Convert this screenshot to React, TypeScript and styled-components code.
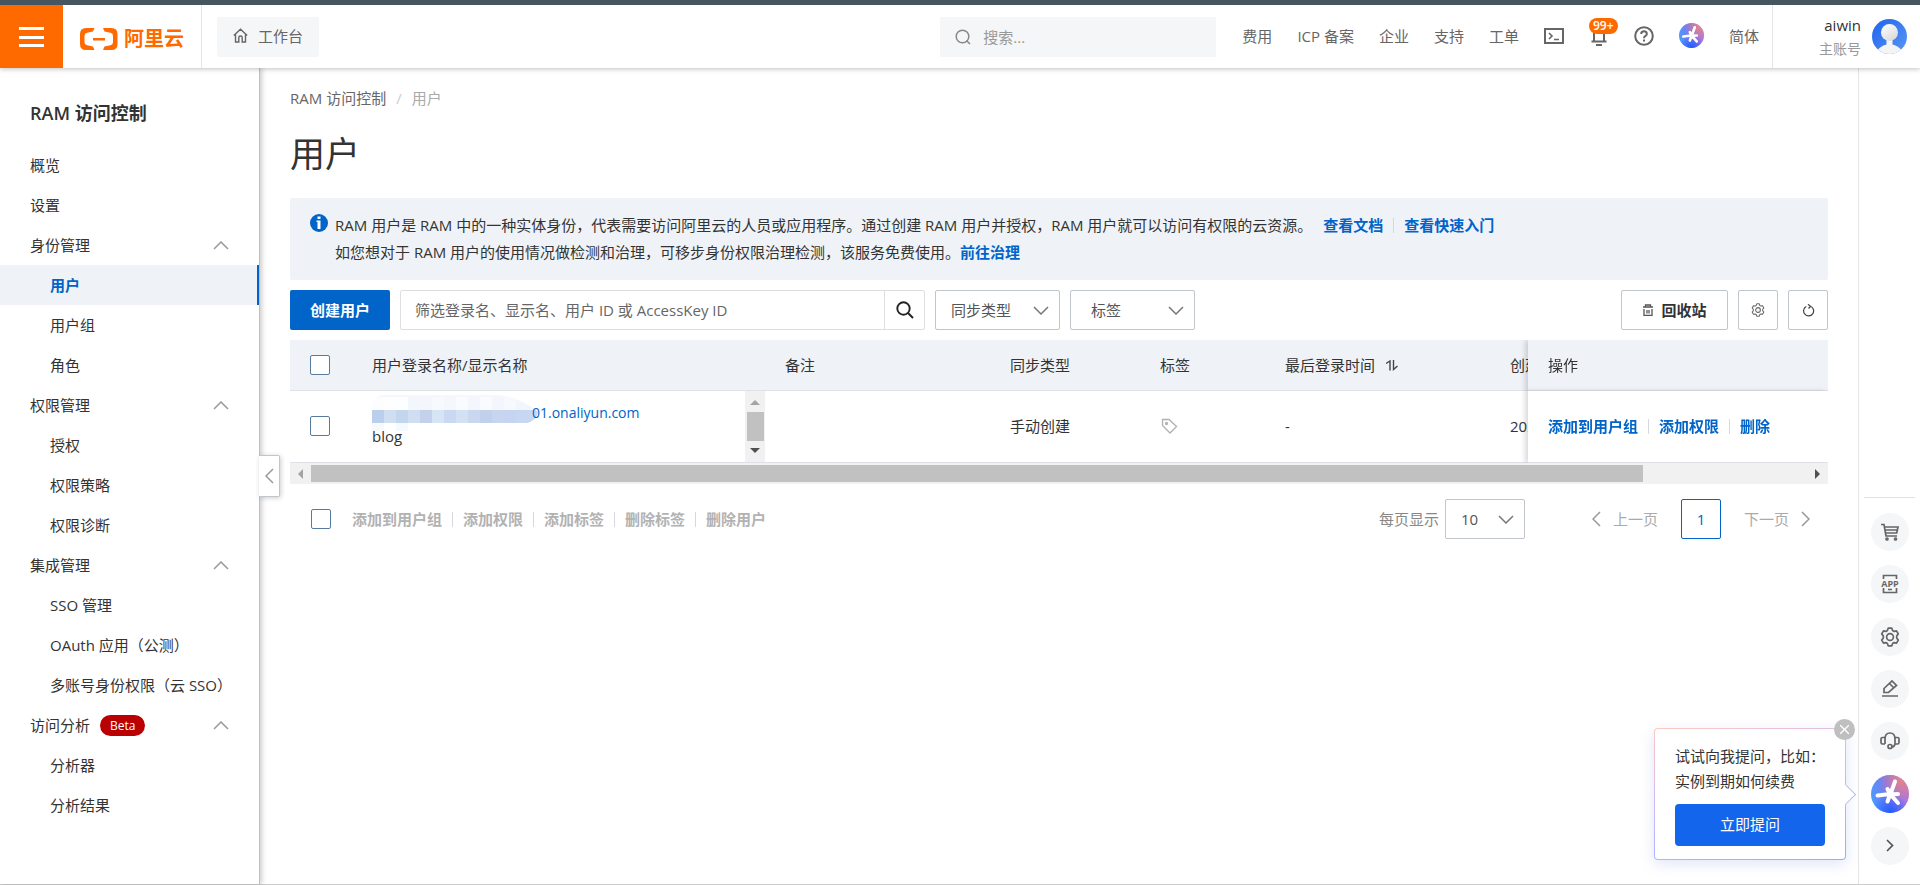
import React from "react";
import styled, { createGlobalStyle, css } from "styled-components";

const GlobalStyle = createGlobalStyle`
  *, *::before, *::after { box-sizing: border-box; }
  body {
    margin: 0;
    background: #fff;
    color: #333;
    font-family: "Open Sans", "Noto Sans CJK SC", sans-serif;
    font-size: 15px;
    line-height: 24px;
  }
  button, input, select { font: inherit; color: inherit; margin: 0; }
  button { cursor: pointer; padding: 0; }
  a { color: inherit; text-decoration: none; }
  svg { display: block; flex: none; }
`;

const Page = styled.div`
  display: flex;
  flex-direction: column;
  min-height: 100vh;
  border-bottom: 1px solid #ccc;
`;

/* ---------- header ---------- */

const Header = styled.header`
  position: relative;
  z-index: 3;
  display: flex;
  height: 68px;
  border-top: 5px solid #465660;
  background: #fff;
  box-shadow: 0 1px 5px rgba(0, 0, 0, 0.25);
`;

const MenuButton = styled.button`
  display: flex;
  align-items: center;
  justify-content: center;
  width: 63px;
  border: 0;
  background: #ff6a00;
`;

const Logo = styled.a`
  display: flex;
  align-items: center;
  gap: 6px;
  width: 139px;
  padding: 5px 0 0 17px;
  border-right: 1px solid #e5e5e5;
  color: #ff6a00;
  font-size: 20px;
  font-weight: 700;
`;

const WorkbenchLink = styled.a`
  display: flex;
  align-items: center;
  gap: 10px;
  align-self: center;
  height: 40px;
  margin-left: 15px;
  padding: 0 16px 2px;
  border-radius: 2px;
  background: #f4f6f8;
  color: #666;
`;

const HeaderSearch = styled.label`
  display: flex;
  align-items: center;
  align-self: center;
  gap: 12px;
  flex: 0 1 276px;
  height: 40px;
  margin-left: auto;
  padding: 0 15px;
  background: #f4f6f8;

  input {
    flex: 1;
    min-width: 0;
    padding: 0;
    border: 0;
    outline: 0;
    background: none;
  }
  input::placeholder { color: #999; opacity: 1; }
`;

const HeaderNav = styled.nav`
  display: flex;
  align-items: center;
  gap: 25px;
  padding: 0 13px 2px 26px;
  border-right: 1px solid #e5e5e5;
  color: #666;
  white-space: nowrap;
`;

const IconButton = styled.button`
  position: relative;
  display: flex;
  align-items: center;
  justify-content: center;
  min-width: 20px;
  border: 0;
  background: none;
`;

const CountBadge = styled.span`
  position: absolute;
  top: -8px;
  left: 0;
  height: 16px;
  padding: 0 4px;
  border-radius: 8px;
  background: #ff6a00;
  color: #fff;
  font-size: 12px;
  font-weight: 600;
  line-height: 16px;
`;

const Account = styled.a`
  display: flex;
  align-items: center;
  justify-content: flex-end;
  gap: 11px;
  width: 147px;
  padding-right: 13px;
  text-align: right;
`;

const AccountText = styled.span`
  display: flex;
  flex-direction: column;
  small { color: #999; font-size: 14px; }
`;

/* ---------- sidebar ---------- */

const Body = styled.div`
  display: flex;
  flex: 1;
`;

const Sidebar = styled.aside`
  position: relative;
  z-index: 2;
  flex: none;
  width: 260px;
  border-right: 1px solid #c0c0c0;
  background: #fff;
  box-shadow: 2px 0 5px rgba(0, 0, 0, 0.2);
`;

const SideTitle = styled.h2`
  margin: 0;
  padding: 33px 30px 20px;
  font-size: 18px;
  font-weight: 600;
  line-height: 24px;
`;

const SideLink = styled.a<{ $nested?: boolean; $active?: boolean }>`
  display: flex;
  align-items: center;
  height: 40px;
  padding-left: ${(p) => (p.$nested ? 50 : 30)}px;
  ${(p) =>
    p.$active &&
    css`
      border-right: 2px solid #0064c8;
      background: #eff3f8;
      color: #0064c8;
      font-weight: 600;
    `}
`;

const SideGroup = styled.button`
  display: flex;
  align-items: center;
  width: 100%;
  height: 40px;
  padding: 0 30px;
  border: 0;
  background: none;
  svg { margin-left: auto; }
`;

const BetaTag = styled.span`
  margin-left: 10px;
  padding: 0 10px;
  border-radius: 11px;
  background: #ba0000;
  color: #fff;
  font-size: 12px;
  line-height: 21px;
`;

const CollapseHandle = styled.button`
  position: absolute;
  top: 387px;
  left: 100%;
  display: flex;
  align-items: center;
  justify-content: center;
  width: 21px;
  height: 42px;
  border: 1px solid #c0c6cc;
  border-left: 0;
  border-radius: 0 2px 2px 0;
  background: #fff;
  box-shadow: 1px 1px 5px rgba(0, 0, 0, 0.2);
`;

/* ---------- main ---------- */

const Main = styled.main`
  flex: 1;
  min-width: 0;
  padding: 18px 30px;
`;

const Breadcrumb = styled.nav`
  display: flex;
  gap: 10px;
  color: #666;
  i { color: #ccc; font-style: normal; }
  span { color: #aaa; }
`;

const PageTitle = styled.h1`
  margin: 20px 0;
  font-size: 35px;
  font-weight: 400;
  line-height: 48px;
`;

const Notice = styled.section`
  display: flex;
  gap: 7px;
  padding: 14px 20px;
  border-radius: 2px;
  background: #eff3f8;
  line-height: 27px;
  p { margin: 0; }
  svg { margin-top: 2px; }
`;

const TextLink = styled.a`
  color: #0064c8;
  font-weight: 700;
`;

const Divider = styled.i`
  display: inline-block;
  width: 1px;
  height: 15px;
  margin: 0 10px;
  background: #d5d9de;
  vertical-align: -2px;
`;

const NoticeLinks = styled.span`
  margin-left: 11px;
`;

const Toolbar = styled.div`
  display: flex;
  gap: 10px;
  margin: 10px 0;
`;

const PrimaryButton = styled.button`
  width: 100px;
  height: 40px;
  border: 0;
  border-radius: 2px;
  background: #0064c8;
  color: #fff;
  font-weight: 700;
`;

const FilterBox = styled.div`
  display: flex;
  flex: 0 1 525px;
  height: 40px;
  border: 1px solid #dedede;
  border-radius: 2px;

  input {
    flex: 1;
    min-width: 0;
    padding: 0 14px;
    border: 0;
    outline: 0;
    background: none;
  }
  input::placeholder { color: #666; opacity: 1; }
  button {
    display: flex;
    align-items: center;
    justify-content: center;
    width: 40px;
    border: 0;
    border-left: 1px solid #dedede;
    background: none;
  }
`;

const SelectBox = styled.span<{ $width: number; $indent?: number }>`
  display: grid;
  align-items: center;
  width: ${(p) => p.$width}px;
  height: 40px;
  border: 1px solid #c0c6cc;
  border-radius: 2px;
  color: #555;

  select, svg { grid-area: 1 / 1; }
  select {
    width: 100%;
    height: 38px;
    padding: 0 30px 0 ${(p) => p.$indent ?? 15}px;
    border: 0;
    outline: 0;
    appearance: none;
    background: none;
  }
  svg {
    justify-self: end;
    margin-right: 10px;
    pointer-events: none;
  }
`;

const ToolbarEnd = styled.div`
  display: flex;
  gap: 10px;
  margin-left: auto;
`;

const OutlineButton = styled.button<{ $width?: number }>`
  display: flex;
  align-items: center;
  justify-content: center;
  gap: 7px;
  width: ${(p) => p.$width ?? 40}px;
  height: 40px;
  border: 1px solid #c0c6cc;
  border-radius: 2px;
  background: #fff;
  font-weight: 700;
`;

const TableViewport = styled.div`
  overflow: hidden;
`;

const Table = styled.table`
  width: 1725px;
  table-layout: fixed;
  border-collapse: separate;
  border-spacing: 0;

  th, td {
    padding: 0 20px;
    border-bottom: 1px solid #dee1e6;
    text-align: left;
    font-weight: 400;
    white-space: nowrap;
  }
  th { height: 51px; background: #eff3f8; }
  td { height: 72px; padding-bottom: 2px; background: #fff; }
  td.scroll { padding-right: 0; padding-bottom: 0; }
  th:last-child, td:last-child {
    position: sticky;
    right: 0;
    box-shadow: -3px 0 5px rgba(0, 0, 0, 0.15);
  }
`;

const Checkbox = styled.input.attrs({ type: "checkbox" })`
  display: block;
  width: 20px;
  height: 20px;
  margin: 0;
  appearance: none;
  border: 1px solid #577b9f;
  border-radius: 2px;
  background: #fff;
`;

const SortHead = styled.span`
  display: flex;
  align-items: center;
  gap: 11px;
`;

const NameCell = styled.div`
  display: flex;
  align-items: center;
  justify-content: space-between;
  height: 71px;
`;

const NameText = styled.div`
  display: flex;
  flex-direction: column;
  padding-bottom: 6px;
  a { display: flex; color: #0064c8; font-size: 14px; }
  > span { line-height: 22px; }
`;

const NameMask = styled.span`
  display: flex;
  width: 160px;
  height: 24px;
  svg { margin-top: -6px; }
`;

const CellScroll = styled.div`
  display: flex;
  flex-direction: column;
  align-items: center;
  justify-content: space-between;
  width: 20px;
  height: 71px;
  padding: 9px 0;
  background: #f1f1f1;
`;

const CellThumb = styled.div`
  width: 17px;
  height: 29px;
  background: #c1c1c1;
`;

const ScrollTrack = styled.div`
  display: flex;
  align-items: center;
  height: 21px;
  padding: 0 8px;
  background: #f1f1f1;
`;

const ScrollThumb = styled.div`
  width: 87.5%;
  height: 17px;
  margin: 0 auto 0 8px;
  background: #c1c1c1;
`;

const Arrow = styled.i<{ $dir: "up" | "down" | "left" | "right"; $dim?: boolean }>`
  width: 0;
  height: 0;
  border: 5px solid transparent;
  ${(p) => {
    const tip = { up: "top", down: "bottom", left: "left", right: "right" }[p.$dir];
    const base = { up: "bottom", down: "top", left: "right", right: "left" }[p.$dir];
    return css`
      border-${tip}-width: 0;
      border-${base}-color: ${p.$dim ? "#a3a3a3" : "#505050"};
    `;
  }}
`;

const Footer = styled.div`
  display: flex;
  align-items: center;
  margin-top: 15px;
  padding: 0 18px 0 21px;
`;

const BatchActions = styled.div`
  display: flex;
  align-items: center;
  margin-left: 21px;
  button { border: 0; background: none; color: #b2b2b2; font-weight: 700; }
`;

const PageSize = styled.label`
  display: flex;
  align-items: center;
  gap: 6px;
  margin-left: auto;
  color: #888;
`;

const Pager = styled.nav`
  display: flex;
  align-items: center;
  gap: 23px;
  margin-left: 67px;
`;

const PagerStep = styled.button`
  display: flex;
  align-items: center;
  gap: 12px;
  border: 0;
  background: none;
  color: #aaa;
`;

const PageNumber = styled.button`
  width: 40px;
  height: 40px;
  border: 1px solid #0064c8;
  border-radius: 2px;
  background: #fff;
  color: #0064c8;
`;

/* ---------- right rail ---------- */

const Rail = styled.aside`
  position: relative;
  display: flex;
  flex: none;
  flex-direction: column;
  align-items: center;
  justify-content: flex-end;
  width: 62px;
  padding-bottom: 19px;
  border-left: 1px solid #e5e5e5;
`;

const RailList = styled.div`
  display: flex;
  flex-direction: column;
  align-items: center;
  justify-content: space-between;
  width: 51px;
  height: 368px;
  padding-top: 15px;
  border-top: 1px solid #e2e2e2;
`;

const RailButton = styled.button`
  display: flex;
  align-items: center;
  justify-content: center;
  width: 38px;
  height: 38px;
  border: 0;
  border-radius: 50%;
  background: #f4f6f8;
`;

const AskCard = styled.section`
  position: absolute;
  right: 74px;
  bottom: 24px;
  width: 192px;
  padding: 15px 20px 13px;
  border: 1px solid transparent;
  border-radius: 4px;
  background:
    linear-gradient(#fff, #fff) padding-box,
    linear-gradient(165deg, #ffc8c0, #c8b8ff 50%, #88b4ff) border-box;
  box-shadow: 0 4px 14px rgba(90, 110, 220, 0.18);
  white-space: nowrap;

  p { margin: 0 0 10px; line-height: 25px; }
`;

const AskPointer = styled.i`
  position: absolute;
  top: 58px;
  right: -8px;
  width: 15px;
  height: 15px;
  border: solid #b4b8ff;
  border-width: 1px 1px 0 0;
  background: #fff;
  transform: rotate(45deg);
`;

const AskButton = styled.button`
  width: 100%;
  height: 42px;
  padding-bottom: 2px;
  border: 0;
  border-radius: 4px;
  background: #1366ec;
  color: #fff;
`;

const CloseButton = styled.button`
  position: absolute;
  top: -10px;
  right: -10px;
  display: flex;
  align-items: center;
  justify-content: center;
  width: 21px;
  height: 21px;
  border: 0;
  border-radius: 50%;
  background: #bfbfbf;
`;

/* ---------- drawings ---------- */

type ChevronDir = "up" | "down" | "left" | "right";
const CHEVRON: Record<ChevronDir, [number, number, string]> = {
  up: [16, 9, "M1 8 8 1l7 7"],
  down: [16, 9, "M1 1l7 7 7-7"],
  left: [9, 16, "M8 1 1 8l7 7"],
  right: [9, 16, "M1 1l7 7-7 7"],
};

const Chevron = ({ dir, color = "#999" }: { dir: ChevronDir; color?: string }) => {
  const [w, h, d] = CHEVRON[dir];
  return (
    <svg width={w} height={h} viewBox={`0 0 ${w} ${h}`} fill="none" stroke={color} strokeWidth="1.5">
      <path d={d} />
    </svg>
  );
};

const Line = ({ size = 20, width = 1.6, color = "#666", children }: {
  size?: number; width?: number; color?: string; children: React.ReactNode;
}) => (
  <svg width={size} height={size} viewBox={`0 0 ${size} ${size}`} fill="none" stroke={color} strokeWidth={width}>
    {children}
  </svg>
);

const Gear = ({ size, width }: { size: number; width: number }) => (
  <svg width={size} height={size} viewBox="0 0 20 20" fill="none" stroke="#666" strokeWidth={width} strokeLinejoin="round">
    <path d="M8.2 1.2h3.6l.8 2.3 1.5.9 2.4-.5 1.8 3.1-1.6 1.9v2.2l1.6 1.9-1.8 3.1-2.4-.5-1.5.9-.8 2.3H8.2l-.8-2.3-1.5-.9-2.4.5L1.7 13l1.6-1.9V8.9L1.7 7l1.8-3.1 2.4.5 1.5-.9z" />
    <circle cx="10" cy="10" r="3.4" />
  </svg>
);

const AiMark = ({ size, id }: { size: number; id: string }) => (
  <svg width={size} height={size} viewBox="0 0 38 38">
    <defs>
      <linearGradient id={`${id}-base`} x1="0" y1="0.6" x2="1" y2="0.4">
        <stop offset="0" stopColor="#4a9cff" />
        <stop offset="0.5" stopColor="#7b74ee" />
        <stop offset="1" stopColor="#b574e0" />
      </linearGradient>
      <radialGradient id={`${id}-warm`} cx="0.8" cy="0.15" r="0.6">
        <stop offset="0" stopColor="#e4848a" />
        <stop offset="1" stopColor="#e4848a" stopOpacity="0" />
      </radialGradient>
      <radialGradient id={`${id}-cool`} cx="0.5" cy="1" r="0.5">
        <stop offset="0" stopColor="#1f5cff" />
        <stop offset="1" stopColor="#1f5cff" stopOpacity="0" />
      </radialGradient>
    </defs>
    <circle cx="19" cy="19" r="19" fill={`url(#${id}-base)`} />
    <circle cx="19" cy="19" r="19" fill={`url(#${id}-warm)`} />
    <circle cx="19" cy="19" r="19" fill={`url(#${id}-cool)`} />
    <path
      d="M19.500 19 24 6.500M19 19l-2.500-5M19 19 6.500 20.500M19 19.500l8-.5M19.500 19.500l7.500 8.500M19 19.500l-2.500 7"
      stroke="#fff"
      strokeWidth="4"
      strokeLinecap="round"
    />
  </svg>
);

const Avatar = () => (
  <svg width="35" height="35" viewBox="0 0 35 35">
    <defs>
      <clipPath id="avatar-clip"><circle cx="17.5" cy="17.5" r="17.5" /></clipPath>
      <linearGradient id="avatar-bg" x1="0" y1="0" x2="1" y2="1">
        <stop offset="0" stopColor="#1d63ee" />
        <stop offset="1" stopColor="#5c97f5" />
      </linearGradient>
      <linearGradient id="avatar-head" x1="0" y1="0" x2="0.6" y2="1">
        <stop offset="0" stopColor="#fff" />
        <stop offset="1" stopColor="#dcdcdc" />
      </linearGradient>
    </defs>
    <g clipPath="url(#avatar-clip)">
      <rect width="35" height="35" fill="url(#avatar-bg)" />
      <path d="M5 32q3-5 9.500-6.500V20h6v5.500Q27 27 30 32v4H5z" fill="#f4f4f4" />
      <circle cx="17.5" cy="13.5" r="8.500" fill="url(#avatar-head)" />
    </g>
  </svg>
);

const MOSAIC = ["#b9cfec", "#d0def1", "#c4d5ee", "#d0def2", "#c3d2ea", "#d7e4f4", "#c9d9f1", "#d3e1f3", "#c9d8f0", "#c1d0eb", "#c7d6ee", "#c5d4f0", "#c8d7f1", "#c8d7f1"];
const MOSAIC_TOP = ["#fbfdfe", "#fefefe", "#fcfeff", "#f2f7fd", "#f3f7fd", "#f6f9fe", "#f4f8fd", "#f8fbff", "#f3f7fd", "#f9fbff", "#f3f6fc", "#f6f9fd", "#f1f6fd", "#f1f6fd"];

const HiddenName = () => (
  <svg width="166" height="36" viewBox="0 0 166 36" aria-hidden="true">
    <defs>
      <clipPath id="mosaic-clip"><path d="M0 15V9Q2 0 12 0h116q24 4 38 17-2 9-11 11H36v8H0z" /></clipPath>
    </defs>
    <g clipPath="url(#mosaic-clip)">
      <rect width="166" height="4" fill="#f6f7fc" />
      {MOSAIC_TOP.map((c, i) => <rect key={i} x={i * 12} y="2" width="12" height="13" fill={c} />)}
      {MOSAIC.map((c, i) => <rect key={i} x={i * 12} y="15" width="12" height="13" fill={c} />)}
      <rect y="28" width="12" height="8" fill="#f8f9fa" />
      <rect x="24" y="28" width="12" height="8" fill="#f5faff" />
    </g>
  </svg>
);

/* ---------- data ---------- */

const GROUPS: { title: string; beta?: boolean; items: string[] }[] = [
  { title: "身份管理", items: ["用户", "用户组", "角色"] },
  { title: "权限管理", items: ["授权", "权限策略", "权限诊断"] },
  { title: "集成管理", items: ["SSO 管理", "OAuth 应用（公测）", "多账号身份权限（云 SSO）"] },
  { title: "访问分析", beta: true, items: ["分析器", "分析结果"] },
];
const BATCH = ["添加到用户组", "添加权限", "添加标签", "删除标签", "删除用户"];
const ROW_ACTIONS = ["添加到用户组", "添加权限", "删除"];
const COLUMN_WIDTHS = [62, 413, 225, 150, 125, 225, 225, 300];

const withDividers = (nodes: React.ReactNode[]) =>
  nodes.map((node, i) => (
    <React.Fragment key={i}>
      {i > 0 && <Divider />}
      {node}
    </React.Fragment>
  ));

const TopBar = () => (
  <Header>
    <MenuButton aria-label="菜单">
      <svg width="25" height="20" viewBox="0 0 25 20" stroke="#fff" strokeWidth="3">
        <path d="M0 1.5h25M0 10.5h25M0 18.500h25" />
      </svg>
    </MenuButton>
    <Logo href="#">
      <svg width="38" height="22" viewBox="0 0 38 22" fill="#ff6a00">
        <path d="M14.500 0H6Q0 0 0 6v10q0 6 6 6h8.500L13 18.500l-6-1.300q-2.500-.6-2.500-3V7.800q0-2.400 2.500-3l6-1.300z" />
        <path d="M23 0h8.500q6 0 6 6v10q0 6-6 6H23l1.500-3.500 6-1.300q2.500-.6 2.500-3V7.800q0-2.400-2.500-3l-6-1.300z" />
        <path d="M13 10h12v2.500H13z" />
      </svg>
      阿里云
    </Logo>
    <WorkbenchLink href="#">
      <Line size={15} width={1.4}>
        <path d="M.8 7.500 7.500 1.300l6.700 6.200M2.500 6.500V14h3.300V9.500q0-1.500 1.700-1.500t1.700 1.500V14h3.300V6.500" />
      </Line>
      工作台
    </WorkbenchLink>
    <HeaderSearch>
      <Line size={16} width={1.5} color="#888">
        <circle cx="7.5" cy="7.5" r="6.3" />
        <path d="M11.500 11.500 15 15" />
      </Line>
      <input placeholder="搜索..." aria-label="搜索" />
    </HeaderSearch>
    <HeaderNav>
      {["费用", "ICP 备案", "企业", "支持", "工单"].map((t) => <a key={t} href="#">{t}</a>)}
      <IconButton aria-label="Cloud Shell">
        <Line width={2}>
          <path d="M1 3h18v14H1z" />
          <path d="m5 7 3 3-3 3M10 13.500h5" strokeWidth="1.6" />
        </Line>
      </IconButton>
      <IconButton aria-label="消息">
        <Line width={2}>
          <path d="M5 15V8q0-4.500 5-4.500T15 8v7M2.500 15.500h15M7 19h6" />
        </Line>
        <CountBadge>99+</CountBadge>
      </IconButton>
      <IconButton aria-label="帮助">
        <Line width={2}>
          <circle cx="10" cy="10" r="8.8" />
          <path d="M7.200 8q0-2.700 2.800-2.700T12.800 8q0 1.300-1.600 2.200Q10 10.900 10 12.200M10 13.500v2" />
        </Line>
      </IconButton>
      <IconButton aria-label="AI 助理"><AiMark size={25} id="ai-top" /></IconButton>
      <a href="#">简体</a>
    </HeaderNav>
    <Account href="#">
      <AccountText>
        <span>aiwin</span>
        <small>主账号</small>
      </AccountText>
      <Avatar />
    </Account>
  </Header>
);

const SideNav = () => (
  <Sidebar>
    <SideTitle>RAM 访问控制</SideTitle>
    <nav>
      <SideLink href="#">概览</SideLink>
      <SideLink href="#">设置</SideLink>
      {GROUPS.map((g) => (
        <div key={g.title}>
          <SideGroup>
            {g.title}
            {g.beta && <BetaTag>Beta</BetaTag>}
            <Chevron dir="up" />
          </SideGroup>
          {g.items.map((t) => (
            <SideLink key={t} href="#" $nested $active={t === "用户"}>{t}</SideLink>
          ))}
        </div>
      ))}
    </nav>
    <CollapseHandle aria-label="收起"><Chevron dir="left" /></CollapseHandle>
  </Sidebar>
);

const UserTable = () => (
  <>
    <TableViewport>
      <Table>
        <colgroup>{COLUMN_WIDTHS.map((w, i) => <col key={i} width={w} />)}</colgroup>
        <thead>
          <tr>
            <th><Checkbox aria-label="全选" /></th>
            <th>用户登录名称/显示名称</th>
            <th>备注</th>
            <th>同步类型</th>
            <th>标签</th>
            <th>
              <SortHead>
                最后登录时间
                <Line size={12} width={1.4} color="#444">
                  <path d="M0 4.500 4 2v9.500M7.500 1v9.500L11.500 7" />
                </Line>
              </SortHead>
            </th>
            <th>创建</th>
            <th>操作</th>
          </tr>
        </thead>
        <tbody>
          <tr>
            <td><Checkbox aria-label="选择 blog" /></td>
            <td className="scroll">
              <NameCell>
                <NameText>
                  <a href="#"><NameMask><HiddenName /></NameMask>01.onaliyun.com</a>
                  <span>blog</span>
                </NameText>
                <CellScroll>
                  <Arrow $dir="up" $dim />
                  <CellThumb />
                  <Arrow $dir="down" />
                </CellScroll>
              </NameCell>
            </td>
            <td />
            <td>手动创建</td>
            <td>
              <Line size={18} width={1.3} color="#b0b0b0">
                <path d="M2.500 2.500h6.500l7.500 7-6.500 6.500-7.500-7.500z" />
                <circle cx="6.5" cy="6.5" r="1" />
              </Line>
            </td>
            <td>-</td>
            <td>202</td>
            <td>{withDividers(ROW_ACTIONS.map((t) => <TextLink href="#">{t}</TextLink>))}</td>
          </tr>
        </tbody>
      </Table>
    </TableViewport>
    <ScrollTrack>
      <Arrow $dir="left" $dim />
      <ScrollThumb />
      <Arrow $dir="right" />
    </ScrollTrack>
  </>
);

const SideRail = () => (
  <Rail>
    <RailList>
      <RailButton aria-label="购物车">
        <Line width={1.7}>
          <path d="M1 2.500h3l2 11.500h11M4.500 5H18l-1.300 6H5.500M5 8h12" />
          <circle cx="7" cy="17" r="1" /><circle cx="15.5" cy="17" r="1" />
        </Line>
      </RailButton>
      <RailButton aria-label="APP">
        <Line width={1.7}>
          <path d="M3.500 5V1.500h13V5M3.500 14v4.500h13V14M8 15.500h4" />
          <text x="10" y="13" textAnchor="middle" fontSize="9" fontWeight="700" fill="#666" stroke="none">APP</text>
        </Line>
      </RailButton>
      <RailButton aria-label="设置"><Gear size={20} width={1.7} /></RailButton>
      <RailButton aria-label="反馈">
        <Line width={1.7}>
          <path d="M2 17h16M4 13.500v-4L12 2l4.500 4.500L8.500 13.500zM9.500 4.500 14 9" />
        </Line>
      </RailButton>
      <RailButton aria-label="客服">
        <Line width={1.7}>
          <path d="M5 13V8Q5 2 10 2t5 6v5M5 6.500H2.500Q1 6.500 1 8v3.500Q1 13 2.500 13H5M15 6.500h2.500Q19 6.500 19 8v3.500q0 1.500-1.500 1.500H15q-.5 3-3.500 3" />
          <circle cx="10" cy="15.5" r="2" />
        </Line>
      </RailButton>
      <RailButton aria-label="AI 助理"><AiMark size={38} id="ai-rail" /></RailButton>
      <RailButton aria-label="展开">
        <svg width="8" height="13" viewBox="0 0 8 13" fill="none" stroke="#555" strokeWidth="1.7"><path d="m1 1 5.500 5.500L1 12" /></svg>
      </RailButton>
    </RailList>
    <AskCard>
      <p>试试向我提问，比如：<br />实例到期如何续费</p>
      <AskButton>立即提问</AskButton>
      <AskPointer />
      <CloseButton aria-label="关闭">
        <svg width="9" height="9" viewBox="0 0 9 9" stroke="#fff" strokeWidth="1.3"><path d="m0 0 9 9M9 0 0 9" /></svg>
      </CloseButton>
    </AskCard>
  </Rail>
);

export default function App() {
  return (
    <Page>
      <GlobalStyle />
      <TopBar />
      <Body>
        <SideNav />
        <Main>
          <Breadcrumb>
            <a href="#">RAM 访问控制</a>
            <i>/</i>
            <span>用户</span>
          </Breadcrumb>
          <PageTitle>用户</PageTitle>
          <Notice>
            <svg width="18" height="18" viewBox="0 0 18 18">
              <circle cx="9" cy="9" r="9" fill="#0064c8" />
              <path d="M7.500 2.500h3v2.500h-3zM6.500 6.500h4V15h-3V8h-1z" fill="#fff" />
            </svg>
            <div>
              <p>
                RAM 用户是 RAM 中的一种实体身份，代表需要访问阿里云的人员或应用程序。通过创建 RAM 用户并授权，RAM 用户就可以访问有权限的云资源。
                <NoticeLinks>
                  {withDividers(["查看文档", "查看快速入门"].map((t) => <TextLink href="#">{t}</TextLink>))}
                </NoticeLinks>
              </p>
              <p>
                如您想对于 RAM 用户的使用情况做检测和治理，可移步身份权限治理检测，该服务免费使用。
                <TextLink href="#">前往治理</TextLink>
              </p>
            </div>
          </Notice>
          <Toolbar>
            <PrimaryButton>创建用户</PrimaryButton>
            <FilterBox>
              <input placeholder="筛选登录名、显示名、用户 ID 或 AccessKey ID" aria-label="筛选" />
              <button aria-label="搜索">
                <Line size={18} width={1.9} color="#222">
                  <circle cx="7.5" cy="7.5" r="6.2" />
                  <path d="m12 12 5 5" />
                </Line>
              </button>
            </FilterBox>
            <SelectBox $width={125}>
              <select aria-label="同步类型"><option>同步类型</option></select>
              <Chevron dir="down" color="#777" />
            </SelectBox>
            <SelectBox $width={125} $indent={20}>
              <select aria-label="标签"><option>标签</option></select>
              <Chevron dir="down" color="#777" />
            </SelectBox>
            <ToolbarEnd>
              <OutlineButton $width={107}>
                <Line size={12} width={1.3} color="#555">
                  <path d="M1 3h10M3.500 3V1h5v2M2 5v6.500h8V5M5 6v3.500M7 6v3.500" />
                </Line>
                回收站
              </OutlineButton>
              <OutlineButton aria-label="列设置"><Gear size={14} width={1.5} /></OutlineButton>
              <OutlineButton aria-label="刷新">
                <Line size={13} width={1.2} color="#444">
                  <path d="M8.500 2.300a5 5 0 1 1-4.200.2M6 .3 8.500 2.300 6.500 4.500" />
                </Line>
              </OutlineButton>
            </ToolbarEnd>
          </Toolbar>
          <UserTable />
          <Footer>
            <Checkbox aria-label="全选本页" />
            <BatchActions>{withDividers(BATCH.map((t) => <button>{t}</button>))}</BatchActions>
            <PageSize>
              每页显示
              <SelectBox $width={80}>
                <select><option>10</option></select>
                <Chevron dir="down" color="#777" />
              </SelectBox>
            </PageSize>
            <Pager>
              <PagerStep><Chevron dir="left" />上一页</PagerStep>
              <PageNumber>1</PageNumber>
              <PagerStep>下一页<Chevron dir="right" /></PagerStep>
            </Pager>
          </Footer>
        </Main>
        <SideRail />
      </Body>
    </Page>
  );
}
